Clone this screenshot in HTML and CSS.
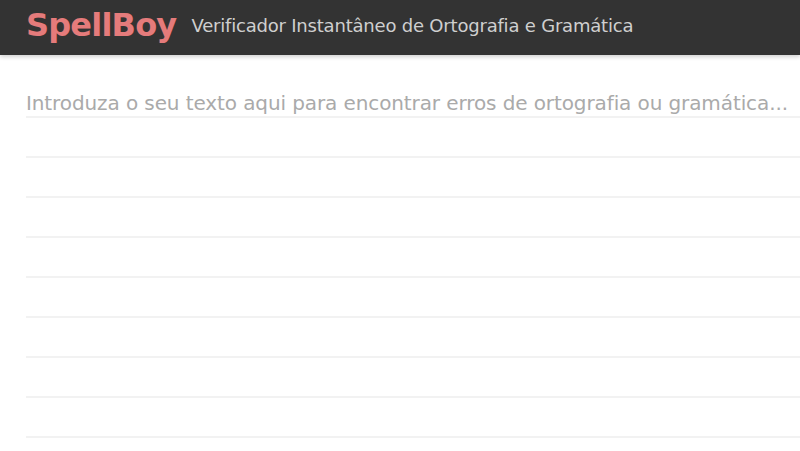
FILE: index.html
```html
<!DOCTYPE html>
<html lang="pt">
<head>
  <meta charset="UTF-8">
  <meta name="viewport" content="width=device-width, initial-scale=1.0">
  <title>SpellBoy - Verificador Instantâneo de Ortografia e Gramática</title>
  <link rel="stylesheet" href="styles.css">
</head>
<body>
  <header class="topbar">
    <span class="logo">SpellBoy</span>
    <span class="tagline">Verificador Instantâneo de Ortografia e Gramática</span>
  </header>
  <main class="editor">
    <!-- Lined writing area -->
    <textarea class="paper" spellcheck="false" placeholder="Introduza o seu texto aqui para encontrar erros de ortografia ou gramática..."></textarea>
  </main>
</body>
</html>
```

FILE: styles.css
```css
/* Page */
html, body {
  margin: 0;
  padding: 0;
  height: 100%;
  overflow: hidden;
  background: #fff;
  font-family: "DejaVu Sans", Verdana, sans-serif;
}

/* Top bar */
.topbar {
  display: flex;
  align-items: center;
  gap: 15px;
  height: 55px;
  padding: 0 0 5px 26px;
  box-sizing: border-box;
  background: #333333;
  box-shadow: 0 2px 4px rgba(0, 0, 0, 0.18);
  position: relative;
  z-index: 1;
}
.logo {
  font-size: 32px;
  font-weight: bold;
  color: #e57b7b;
  letter-spacing: -0.8px;
}
.tagline {
  font-size: 18px;
  color: #cfcfcf;
  letter-spacing: -0.2px;
}

/* Editor */
.editor {
  padding: 28px 0 0 26px;
}
.paper {
  display: block;
  width: 100%;
  height: 380px;
  margin: 0;
  padding: 0;
  border: 0;
  outline: none;
  resize: none;
  font-family: "DejaVu Sans", Verdana, sans-serif;
  font-size: 20px;
  line-height: 40px;
  color: #555;
  background-color: #fff;
  background-image: linear-gradient(to bottom, transparent 33px, #f2f2f2 33px, #f2f2f2 35px, transparent 35px);
  background-size: 100% 40px;
  background-attachment: local;
}
.paper::placeholder {
  color: #aaa;
  letter-spacing: -0.1px;
}
```
